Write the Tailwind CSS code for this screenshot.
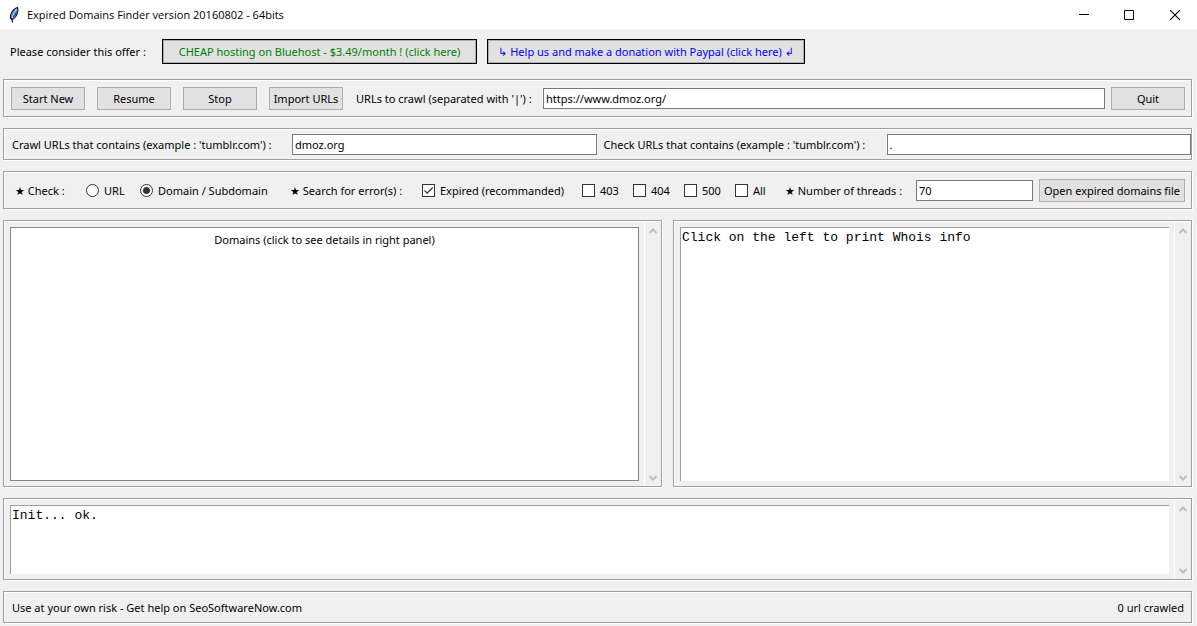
<!DOCTYPE html>
<html lang="en">
<head>
<meta charset="utf-8">
<meta name="viewport" content="width=device-width, initial-scale=1">
<title>Expired Domains Finder version 20160802 - 64bits</title>
<script src="https://cdn.jsdelivr.net/npm/@tailwindcss/browser@4"></script>
</head>
<body class="flex min-h-screen flex-col bg-[#f0f0f0] font-['Noto_Sans','DejaVu_Sans',sans-serif] text-[11px] leading-4 whitespace-nowrap text-black">

<!-- Title bar -->
<header class="flex h-[29px] shrink-0 items-center bg-white font-['Open_Sans',sans-serif]">
  <svg class="ml-2 h-4 w-3 shrink-0" viewBox="0 0 12 16" aria-hidden="true">
    <path d="M9.500 .5C7 1 3.500 4 2.500 8.500L2.500 11.500 4.500 12.500C7 11 9.500 7 10 3.500Z" fill="#4b8fd0" stroke="#16202c" stroke-width="1.100"/>
    <path d="M8.500 2C6 5 4.500 9 4 12" fill="none" stroke="#c5e2fa" stroke-width="1"/>
    <path d="M5 10L8.500 5.500" fill="none" stroke="#1d3f66" stroke-width="1"/>
    <path d="M3.800 11L4.500 15.500" stroke="#111" stroke-width="1.200"/>
  </svg>
  <h1 class="ml-[7px] flex-1">Expired Domains Finder version 20160802 - 64bits</h1>
  <button class="grid h-full w-11 place-items-center" aria-label="Minimize"><svg width="10" height="10" viewBox="0 0 10 10"><path d="M0 4.500H10" stroke="#000"/></svg></button>
  <button class="grid h-full w-[46px] place-items-center" aria-label="Maximize"><svg width="10" height="10" viewBox="0 0 10 10"><path d="M.5 .5H9.500V9.500H.5Z" fill="none" stroke="#000"/></svg></button>
  <button class="grid h-full w-[45px] place-items-center" aria-label="Close"><svg width="10" height="10" viewBox="0 0 10 10"><path d="M0 0L10 10M10 0L0 10" stroke="#000" stroke-width="1.100"/></svg></button>
</header>

<!-- Offers -->
<div class="flex h-[50px] shrink-0 items-center pb-[5px] pl-[10px]">
  <span class="w-[152px] shrink-0">Please consider this offer :</span>
  <button class="h-[25px] w-[315px] shrink-0 border border-black bg-[#e1e1e1] text-[#008000] shadow-[inset_0_0_0_1px_#adadad]">CHEAP hosting on Bluehost - $3.49/month ! (click here)</button>
  <button class="ml-[10px] h-[25px] w-[318px] shrink-0 border border-black bg-[#e1e1e1] text-[#0000ff] shadow-[inset_0_0_0_1px_#adadad]">↳ Help us and make a donation with Paypal (click here) ↲</button>
</div>

<main class="flex flex-1 flex-col gap-[11px] pr-[5px] pb-[3px] pl-[3px]">

  <!-- Crawl controls -->
  <section class="flex h-[38px] shrink-0 items-center border border-[#a0a0a0] pr-[6px] pl-[7px] shadow-[inset_1px_1px_0_#fff,1px_1px_0_#fff]">
    <div class="flex shrink-0 gap-3">
      <button class="h-[23px] w-[74px] border border-[#adadad] bg-[#e1e1e1] pt-px">Start New</button>
      <button class="h-[23px] w-[74px] border border-[#adadad] bg-[#e1e1e1] pt-px">Resume</button>
      <button class="h-[23px] w-[74px] border border-[#adadad] bg-[#e1e1e1] pt-px">Stop</button>
      <button class="h-[23px] w-[74px] border border-[#adadad] bg-[#e1e1e1] pt-px">Import URLs</button>
    </div>
    <label for="urls" class="ml-[13px] w-[187px] shrink-0 pt-px">URLs to crawl (separated with '|') :</label>
    <input id="urls" type="text" value="https://www.dmoz.org/" class="h-[21px] min-w-0 flex-1 border border-[#7a7a7a] bg-white px-[2px] outline-none">
    <button class="ml-[6px] h-[23px] w-[74px] shrink-0 border border-[#adadad] bg-[#e1e1e1] pt-px">Quit</button>
  </section>

  <!-- URL filters -->
  <section class="flex h-8 shrink-0 items-center border border-[#a0a0a0] pl-2 shadow-[inset_1px_1px_0_#fff,1px_1px_0_#fff]">
    <label for="crawl" class="w-[280px] shrink-0 pt-px">Crawl URLs that contains (example : 'tumblr.com') :</label>
    <input id="crawl" type="text" value="dmoz.org" class="h-[21px] min-w-0 flex-1 border border-[#7a7a7a] bg-white px-[2px] outline-none">
    <label for="check" class="ml-[7px] w-[283px] shrink-0 pt-px">Check URLs that contains (example : 'tumblr.com') :</label>
    <input id="check" type="text" value="." class="h-[21px] min-w-0 flex-1 border border-[#7a7a7a] bg-white px-[2px] outline-none">
  </section>

  <!-- Check options -->
  <section class="flex h-[38px] shrink-0 items-center border border-[#a0a0a0] pr-[6px] pl-[11px] shadow-[inset_1px_1px_0_#fff,1px_1px_0_#fff]">
    <span class="w-[71px] shrink-0 pt-px">★ Check :</span>
    <label class="flex w-[54px] shrink-0 items-center gap-[5px]"><input type="radio" name="scope" class="size-[13px] appearance-none rounded-full border border-[#333] bg-white checked:bg-[radial-gradient(circle,#333_0_3px,#fff_4px)]"><span class="pt-px">URL</span></label>
    <label class="flex w-[150px] shrink-0 items-center gap-[5px]"><input type="radio" name="scope" checked class="size-[13px] appearance-none rounded-full border border-[#333] bg-white checked:bg-[radial-gradient(circle,#333_0_3px,#fff_4px)]"><span class="pt-px">Domain / Subdomain</span></label>
    <span class="w-[132px] shrink-0 pt-px">★ Search for error(s) :</span>
    <label class="flex w-[160px] shrink-0 items-center gap-[5px]">
      <span class="grid"><input type="checkbox" checked class="peer col-start-1 row-start-1 size-[13px] appearance-none border border-[#333] bg-white"><svg class="pointer-events-none invisible col-start-1 row-start-1 peer-checked:visible" width="13" height="13" viewBox="0 0 13 13"><path d="M2.500 6.500L5.200 9.200L10.700 3.500" fill="none" stroke="#333" stroke-width="1.200"/></svg></span><span class="pt-px">Expired (recommanded)</span></label>
    <label class="flex w-[51px] shrink-0 items-center gap-[5px]"><input type="checkbox" class="size-[13px] appearance-none border border-[#333] bg-white"><span class="pt-px">403</span></label>
    <label class="flex w-[51px] shrink-0 items-center gap-[5px]"><input type="checkbox" class="size-[13px] appearance-none border border-[#333] bg-white"><span class="pt-px">404</span></label>
    <label class="flex w-[51px] shrink-0 items-center gap-[5px]"><input type="checkbox" class="size-[13px] appearance-none border border-[#333] bg-white"><span class="pt-px">500</span></label>
    <label class="flex w-[50px] shrink-0 items-center gap-[5px]"><input type="checkbox" class="size-[13px] appearance-none border border-[#333] bg-white"><span class="pt-px">All</span></label>
    <label for="threads" class="w-[131px] shrink-0 pt-px">★ Number of threads :</label>
    <input id="threads" type="text" value="70" class="h-[21px] min-w-0 flex-1 border border-[#7a7a7a] bg-white px-[2px] outline-none">
    <button class="ml-[6px] h-[23px] w-[146px] shrink-0 border border-[#adadad] bg-[#e1e1e1] pt-px">Open expired domains file</button>
  </section>

  <!-- Domain list and whois details -->
  <div class="grid flex-1 grid-cols-[659fr_519fr] gap-[11px]">
    <section class="flex min-w-0 border border-[#a0a0a0] pl-[6px] shadow-[inset_1px_1px_0_#fff,1px_1px_0_#fff]">
      <div class="mt-[6px] mb-[5px] min-w-0 flex-1 border border-[#828790] bg-white">
        <table class="w-full"><thead><tr><th class="py-1 font-normal">Domains (click to see details in right panel)</th></tr></thead></table>
      </div>
      <div class="mt-px ml-[5px] flex w-[17px] shrink-0 flex-col items-center justify-between border-l border-white pt-[6px] pb-[5px]">
        <svg width="8" height="6" viewBox="0 0 8 6"><path d="M.5 5L4 1.500L7.500 5" fill="none" stroke="#bfbfbf" stroke-width="2"/></svg>
        <svg width="8" height="6" viewBox="0 0 8 6"><path d="M.5 1L4 4.500L7.500 1" fill="none" stroke="#bfbfbf" stroke-width="2"/></svg>
      </div>
    </section>
    <section class="flex min-w-0 border border-[#a0a0a0] pl-[6px] shadow-[inset_1px_1px_0_#fff,1px_1px_0_#fff]">
      <textarea aria-label="Whois info" class="mt-[6px] mb-[5px] min-w-0 flex-1 resize-none overflow-hidden border-t border-l border-[#a0a0a0] bg-white px-px py-[2px] font-['Liberation_Mono',monospace] text-[13px] leading-4 outline-none">Click on the left to print Whois info</textarea>
      <div class="mt-px ml-[5px] flex w-[17px] shrink-0 flex-col items-center justify-between border-l border-white pt-[6px] pb-[5px]">
        <svg width="8" height="6" viewBox="0 0 8 6"><path d="M.5 5L4 1.500L7.500 5" fill="none" stroke="#bfbfbf" stroke-width="2"/></svg>
        <svg width="8" height="6" viewBox="0 0 8 6"><path d="M.5 1L4 4.500L7.500 1" fill="none" stroke="#bfbfbf" stroke-width="2"/></svg>
      </div>
    </section>
  </div>

  <!-- Log -->
  <section class="flex h-[82px] shrink-0 border border-[#a0a0a0] pl-[6px] shadow-[inset_1px_1px_0_#fff,1px_1px_0_#fff]">
    <textarea aria-label="Log" class="mt-[6px] mb-[5px] min-w-0 flex-1 resize-none overflow-hidden border-t border-l border-[#a0a0a0] bg-white px-px py-[2px] font-['Liberation_Mono',monospace] text-[13px] leading-4 outline-none">Init... ok.</textarea>
    <div class="mt-px ml-[5px] flex w-[17px] shrink-0 flex-col items-center justify-between border-l border-white pt-[6px] pb-[5px]">
      <svg width="8" height="6" viewBox="0 0 8 6"><path d="M.5 5L4 1.500L7.500 5" fill="none" stroke="#bfbfbf" stroke-width="2"/></svg>
      <svg width="8" height="6" viewBox="0 0 8 6"><path d="M.5 1L4 4.500L7.500 1" fill="none" stroke="#bfbfbf" stroke-width="2"/></svg>
    </div>
  </section>

  <!-- Status bar -->
  <footer class="flex h-8 shrink-0 items-center justify-between border border-[#a0a0a0] pt-px pr-[7px] pl-2 shadow-[inset_1px_1px_0_#fff,1px_1px_0_#fff]">
    <span>Use at your own risk - Get help on SeoSoftwareNow.com</span>
    <span>0 url crawled</span>
  </footer>
</main>
</body>
</html>
